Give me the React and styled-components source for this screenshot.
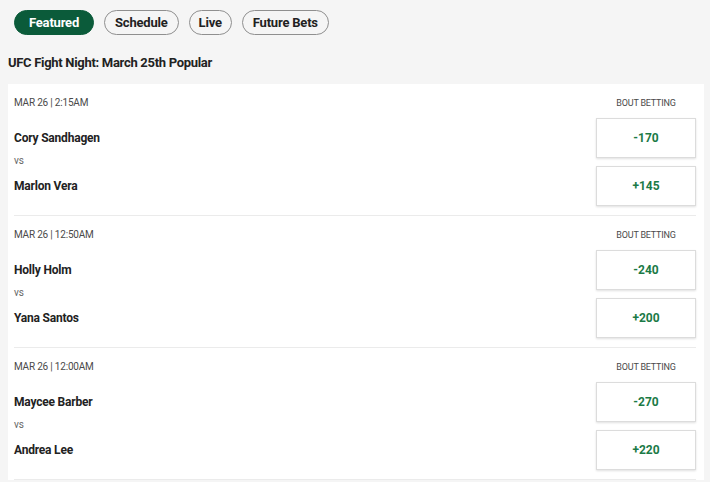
import styled, { createGlobalStyle } from "styled-components";

const GlobalStyle = createGlobalStyle`
	html, body {
		margin: 0;
		padding: 0;
		background: #f5f5f5;
	}
	body {
		font-family: Roboto, "Liberation Sans", sans-serif;
		color: #222;
	}
`;

const Page = styled.div`
	width: 710px;
	height: 482px;
	overflow: hidden;
	padding: 10px 6px 0 8px;
	box-sizing: border-box;
`;

const Tabs = styled.div`
	display: flex;
	gap: 10px;
	padding-left: 6px;
`;

const Pill = styled.button`
	height: 25px;
	padding: 0 ${(p) => p.$pad || 10}px;
	border-radius: 13px;
	border: 1px solid ${(p) => (p.$active ? "#0b5b3a" : "#8f8f8f")};
	background: ${(p) => (p.$active ? "#0b5b3a" : "#f5f5f5")};
	color: ${(p) => (p.$active ? "#fff" : "#222")};
	font-family: inherit;
	font-size: 13px;
	font-weight: 700;
	letter-spacing: -0.2px;
	box-sizing: border-box;
	cursor: pointer;
`;

const Title = styled.h2`
	margin: 0;
	padding: 20px 0 13px;
	font-size: 13px;
	font-weight: 700;
	line-height: 16px;
	letter-spacing: -0.3px;
`;

const Card = styled.div`
	background: #fff;
	padding: 0 8px 0 6px;
`;

const Bout = styled.div`
	padding: 13px 0 9px;
	border-bottom: 1px solid #ebebeb;
`;

const Header = styled.div`
	display: flex;
	justify-content: space-between;
	margin-bottom: 9px;
`;

const Meta = styled.div`
	width: ${(p) => (p.$right ? "100px" : "auto")};
	font-size: ${(p) => (p.$right ? "9px" : "10px")};
	line-height: 12px;
	color: #4a4a4a;
	text-align: ${(p) => (p.$right ? "center" : "left")};
	text-transform: uppercase;
	letter-spacing: -0.2px;
`;

const Body = styled.div`
	display: grid;
	grid-template-columns: 1fr 100px;
`;

const Names = styled.div`
	display: flex;
	flex-direction: column;
`;

const Name = styled.div`
	height: 40px;
	line-height: 40px;
	font-size: 12px;
	font-weight: 700;
	letter-spacing: -0.2px;
	color: #222;
`;

const Vs = styled.div`
	height: 8px;
	line-height: 6px;
	font-size: 10px;
	color: #666;
`;

const Odds = styled.div`
	display: flex;
	flex-direction: column;
	gap: 8px;
`;

const OddsButton = styled.button`
	height: 40px;
	width: 100px;
	background: #fff;
	border: 1px solid #dcdcdc;
	box-shadow: 0 1px 2px rgba(0, 0, 0, 0.12);
	color: #1b7a46;
	font-family: inherit;
	font-size: 12px;
	font-weight: 700;
	cursor: pointer;
`;

const bouts = [
	{ time: "MAR 26 | 2:15AM", a: "Cory Sandhagen", b: "Marlon Vera", oa: "-170", ob: "+145" },
	{ time: "MAR 26 | 12:50AM", a: "Holly Holm", b: "Yana Santos", oa: "-240", ob: "+200" },
	{ time: "MAR 26 | 12:00AM", a: "Maycee Barber", b: "Andrea Lee", oa: "-270", ob: "+220" },
];

const tabs = [
	{ label: "Featured", pad: 14 },
	{ label: "Schedule", pad: 10 },
	{ label: "Live", pad: 9 },
	{ label: "Future Bets", pad: 10 },
];

export default function App() {
	return (
		<Page>
			<GlobalStyle />
			<Tabs>
				{tabs.map((t, i) => (
					<Pill key={t.label} $active={i === 0} $pad={t.pad}>
						{t.label}
					</Pill>
				))}
			</Tabs>
			<Title>UFC Fight Night: March 25th Popular</Title>
			<Card>
				{bouts.map((b) => (
					<Bout key={b.a}>
						<Header>
							<Meta>{b.time}</Meta>
							<Meta $right>Bout Betting</Meta>
						</Header>
						<Body>
							<Names>
								<Name>{b.a}</Name>
								<Vs>vs</Vs>
								<Name>{b.b}</Name>
							</Names>
							<Odds>
								<OddsButton>{b.oa}</OddsButton>
								<OddsButton>{b.ob}</OddsButton>
							</Odds>
						</Body>
					</Bout>
				))}
			</Card>
		</Page>
	);
}
